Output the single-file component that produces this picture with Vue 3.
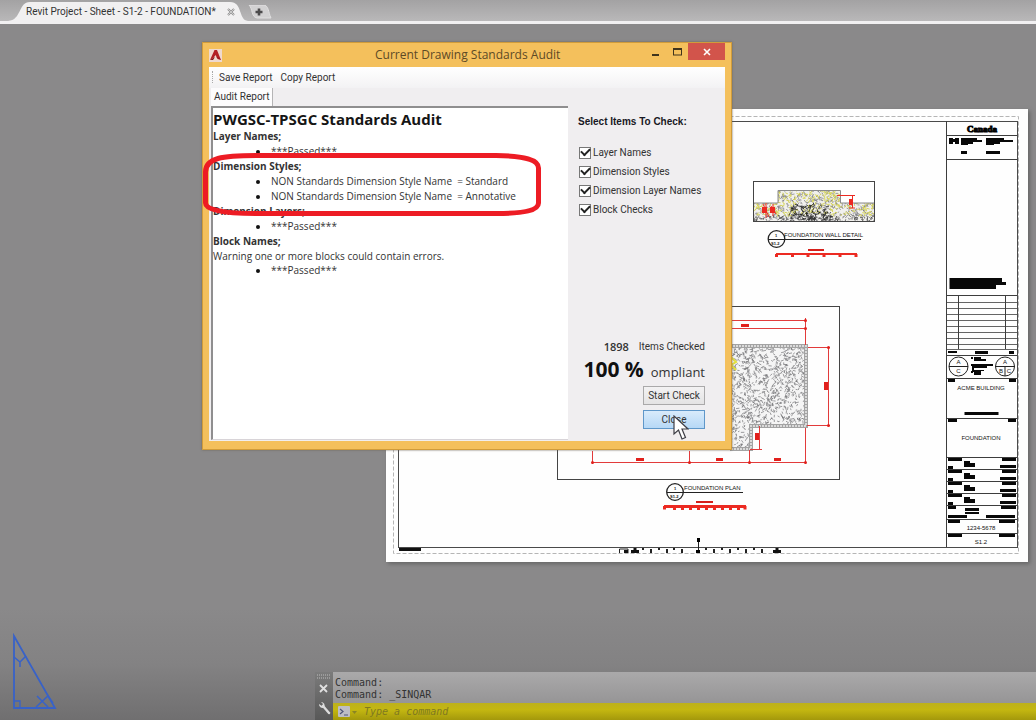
<script setup>
import { ref } from 'vue'

const checks = ref([
  { id: 'layers', label: 'Layer Names', on: true },
  { id: 'dims', label: 'Dimension Styles', on: true },
  { id: 'dimlayers', label: 'Dimension Layer Names', on: true },
  { id: 'blocks', label: 'Block Checks', on: true }
])

const sections = [
  { title: 'Layer Names;', items: ['***Passed***'] },
  {
    title: 'Dimension Styles;',
    items: [
      'NON Standards Dimension Style Name  = Standard',
      'NON Standards Dimension Style Name  = Annotative'
    ]
  },
  { title: 'Dimension Layers;', items: ['***Passed***'] },
  {
    title: 'Block Names;',
    note: 'Warning one or more blocks could contain errors.',
    items: ['***Passed***']
  }
]

const command = ref('')

// Seeded generator keeps the concrete hatch stable between renders.
function hatch(seed, count, x, y, w, h) {
  let s = seed
  const rnd = () => {
    s = (s * 16807) % 2147483647
    return s / 2147483647
  }
  let d = ''
  for (let i = 0; i < count; i++) {
    const px = x + rnd() * w
    const py = y + rnd() * h
    const a = rnd() * Math.PI * 2
    const l = 1.5 + rnd() * 2
    d += `M${px.toFixed(1)} ${py.toFixed(1)}l${(Math.cos(a) * l).toFixed(1)} ${(Math.sin(a) * l).toFixed(1)}`
  }
  return d
}
const slabHatch = hatch(77, 1250, 730, 345, 77, 104)
const wallGrey = hatch(11, 520, 754, 190, 120, 31)
const wallYellow = hatch(29, 330, 754, 191, 120, 24)
const wallCore = hatch(53, 120, 790, 204, 40, 17)
const wallBase = hatch(91, 110, 754, 216, 120, 5)

const revisionLines = [302, 308, 314, 320, 326, 332, 338, 344, 349]
const blockLines = [135, 159, 295, 355, 378, 418, 457, 469, 481, 493, 505, 519, 533]
const rowTops = [458, 470, 482, 494]
const bottomTicks = [651, 667, 682, 714, 730, 746, 762]
</script>

<template>
  <div class="app">
    <nav class="tabs" aria-label="Drawings">
      <div class="tab">
        <svg class="tab-shape" viewBox="0 0 240 20" preserveAspectRatio="none" aria-hidden="true">
          <path d="M0 20C14 19 10 1 22 1H222C235 1 230 19 240 20Z" fill="#f1f0f1" />
        </svg>
        <span class="tab-name">Revit Project - Sheet - S1-2 - FOUNDATION*</span>
        <button class="tab-close" aria-label="Close drawing">
          <svg width="8" height="8" viewBox="0 0 8 8"><path d="M1 1L7 7M7 1L1 7" stroke="#8f8e8f" stroke-width="2" /><path d="M1 1L7 7M7 1L1 7" stroke="#e4e4e4" stroke-width=".7" /></svg>
        </button>
      </div>
      <button class="tab-new" aria-label="New drawing">
        <svg width="24" height="14" viewBox="0 0 24 14">
          <path d="M1 0H15C21 0 20 7 23 13H9C3 12 5 4 1 0Z" fill="#d2d1d2" stroke="#e1e0e1" />
          <path d="M11 3.5V10.5M7.500 7H14.500" stroke="#4c4b4c" stroke-width="2.600" />
        </svg>
      </button>
    </nav>

    <main class="canvas">
      <svg class="sheet" viewBox="386 109 642 453" role="img" aria-label="Foundation sheet">
        <rect x="386" y="109" width="642" height="453" fill="#fefefe" />
        <rect x="393.500" y="116.500" width="625" height="437" fill="none" stroke="#b5b5b5" stroke-dasharray="4 2" />
        <rect x="398.500" y="121.500" width="619" height="426" fill="none" stroke="#4a4a4a" />
        <path d="M399 549.500H421" stroke="#111" stroke-width="3" />

        <!-- wall detail -->
        <rect x="753.500" y="181.500" width="121" height="40" fill="#fff" stroke="#444" />
        <clipPath id="wall"><path d="M754 203H778V190H840V203H874V221H754Z" /></clipPath>
        <g clip-path="url(#wall)" fill="none">
          <path d="M754 190H874V221H754Z" fill="#f1f0ed" />
          <path :d="wallGrey" stroke="#77777c" stroke-width=".7" />
          <path :d="wallYellow" stroke="#d5d24f" stroke-width=".9" />
          <path :d="wallCore" stroke="#222" stroke-width=".8" />
          <path :d="wallBase" stroke="#333" stroke-width=".7" />
        </g>
        <path d="M754 203H778V190.500H840.500V203H874" fill="none" stroke="#8a8a8a" />
        <g stroke="#ec2a22" fill="#ec2a22">
          <path d="M766 203V218M773 204V216M837 195.500H855M852.500 196V208M849 208H855" fill="none" />
          <rect x="762.500" y="207.500" width="4" height="5" /><rect x="770.500" y="207.500" width="4" height="5" />
          <path d="M763 204L769 217M771 206L776 214" fill="none" />
          <rect x="849.500" y="199.500" width="3" height="5" />
        </g>
        <g fill="none" stroke="#222">
          <circle cx="776.500" cy="239" r="8.300" stroke-width="1.300" />
          <path d="M768 239.500H861" />
        </g>
        <text class="micro" x="775" y="237">1</text>
        <text class="micro" x="771" y="245">S1-2</text>
        <text class="label" x="784" y="237">FOUNDATION WALL DETAIL</text>
        <path d="M808 250H824" stroke="#d6201b" stroke-width="2" />
        <path d="M776 254H857" stroke="#ec2a22" stroke-width="2" />
        <path d="M776.500 254V257M792.500 254V257M808 254V257M824 254V257M840 254V257M856 254V257" stroke="#ec2a22" stroke-width="3" />

        <!-- foundation plan -->
        <rect x="557.500" y="306.500" width="282" height="173" fill="none" stroke="#444" />
        <clipPath id="slab"><path d="M730 345H808V428H753V451H730Z" /></clipPath>
        <path d="M730 344H808V428H753V451H730Z" fill="#f5f5f5" />
        <path :d="slabHatch" clip-path="url(#slab)" stroke="#747477" stroke-width=".7" fill="none" />
        <path d="M730 346H806V426H751V449H730" fill="none" stroke="#a3a3a3" stroke-width="4" />
        <path d="M730 346H806V426H751V449H730" fill="none" stroke="#dadada" stroke-width="2" stroke-dasharray="2 1" />
        <path d="M731 357L736 362L731 365L736 370" fill="none" stroke="#e2e040" stroke-width="2" />
        <g fill="none" stroke="#e23b3b">
          <path d="M730 320.500H806M730 328.500H806M805.500 318V345M808 347.500H830M828.500 347V425M807 425.500H830" />
          <path d="M759.500 426V449M750 449.500H762M805.500 428V464M592 462.500H806M592.500 451V464M689.500 451V464M749.500 450V464" />
        </g>
        <g fill="#e1201c">
          <rect x="741" y="324" width="8" height="3" /><rect x="824" y="382" width="4" height="8" />
          <rect x="755" y="433" width="4" height="7" />
          <rect x="636" y="458" width="8" height="3" /><rect x="716" y="458" width="7" height="3" /><rect x="774" y="458" width="7" height="3" />
          <circle v-for="x in [592.5, 689.5, 749.5, 805.5]" :key="x" :cx="x" cy="462.500" r="1.500" />
          <circle cx="805.500" cy="320.500" r="1.500" /><circle cx="805.500" cy="328.500" r="1.500" />
          <circle cx="828.500" cy="347.500" r="1.500" /><circle cx="828.500" cy="425.500" r="1.500" />
        </g>
        <g fill="none" stroke="#222">
          <circle cx="675" cy="492" r="8.300" stroke-width="1.300" />
          <path d="M667 492.500H743" />
        </g>
        <text class="micro" x="674" y="490">1</text>
        <text class="micro" x="670" y="498">S1-2</text>
        <text class="label" x="684" y="490">FOUNDATION PLAN</text>
        <path d="M696 502H713" stroke="#d6201b" stroke-width="2" />
        <path d="M664 506.500H746" stroke="#ec2a22" stroke-width="3" />
        <path d="M664.500 506V509.500M745 506V509.500" stroke="#ec2a22" stroke-width="3" />
        <path d="M673 509H741" stroke="#ec2a22" stroke-width="2" stroke-dasharray="3 5" />

        <!-- sheet scale -->
        <path d="M698.500 540V552" stroke="#222" />
        <rect x="697" y="538" width="3" height="4" />
        <path d="M619.500 553V549H628V553" fill="none" stroke="#222" />
        <path d="M624 551.500H628M631 551.500H639M773 551.500H781" stroke="#111" stroke-width="3" />
        <path d="M635 548V552M777 548V552" stroke="#111" stroke-width="3" />
        <path v-for="x in bottomTicks" :key="x" :d="`M${x} 549V553M${x - 8} 548V550`" stroke="#222" stroke-width="2" />
        <rect x="696" y="550" width="4" height="3" />

        <!-- title block -->
        <g fill="none" stroke="#3d3d3d">
          <path d="M946.500 121V547" />
          <path v-for="y in blockLines" :key="y" :d="`M947 ${y + 0.5}H1017`" />
          <path v-for="y in revisionLines" :key="y" :d="`M947 ${y + 0.5}H1017`" stroke-width=".8" />
          <path d="M958.500 295V349M1005.500 295V349" />
        </g>
        <text class="wordmark" x="967" y="132">Canada</text>
        <g fill="#080808">
          <path d="M949 138H953V139H955V138H959V144H955V142H953V144H949Z" />
          <path d="M961 138H977V140H982V142H973V144H968V145H961Z" />
          <path d="M986 138H1004V140H1013V142H1000V144H994V145H986Z" />
          <rect x="961" y="151" width="6" height="3" /><rect x="986" y="151" width="14" height="3" />
          <path d="M949.500 278H1002V282H1006V285H996V289H949.500Z" />
          <rect x="948" y="351" width="9" height="2" /><rect x="975" y="351" width="13" height="3" /><rect x="1009" y="351" width="5" height="3" />
          <path d="M974 357H981V359H986V361H974ZM972 364H993V366H987V368H974V370H984V371H981V375H974V372H972Z" />
          <rect x="971" y="357" width="2" height="2" /><rect x="971" y="364" width="2" height="2" /><rect x="971" y="371" width="2" height="2" />
          <rect x="948" y="379" width="7" height="3" /><rect x="1009" y="379" width="7" height="3" />
          <rect x="964.500" y="412" width="34" height="3" />
          <rect x="948" y="419" width="9" height="3" /><rect x="1008" y="419" width="8" height="3" />
          <template v-for="y in rowTops" :key="y">
            <rect x="948" :y="y" width="14" height="3" /><rect x="1002" :y="y" width="14" height="3" />
            <rect x="948" :y="y + 8" width="5" height="3" /><rect x="1000" :y="y + 7" width="16" height="3" />
            <path :d="`M964 ${y + 3}H970V${y + 5}H975V${y + 9}H964Z`" />
          </template>
          <rect x="948" y="506" width="8" height="3" /><rect x="1001" y="506" width="15" height="3" />
          <rect x="965" y="508" width="14" height="3" /><rect x="965" y="512" width="14" height="2" />
          <rect x="948" y="515" width="19" height="3" /><rect x="986" y="515" width="29" height="3" />
          <rect x="948" y="520" width="12" height="3" /><rect x="999" y="520" width="16" height="3" />
          <rect x="948" y="534" width="14" height="3" /><rect x="999" y="534" width="16" height="3" />
        </g>
        <g fill="none" stroke="#222">
          <circle cx="958.500" cy="366.500" r="9.500" /><path d="M949 366.500H968" />
          <circle cx="1005" cy="366.500" r="9.500" /><path d="M995 366.500H1015M1005 367V376" />
        </g>
        <g class="plate">
          <text x="958.500" y="364">A</text><text x="958.500" y="373">C</text>
          <text x="1005" y="364">A</text><text x="1001" y="373">B</text><text x="1009" y="373">C</text>
          <text x="981" y="390">ACME BUILDING</text>
          <text x="981" y="440">FOUNDATION</text>
          <text x="981" y="530">1234-5678</text>
          <text x="981" y="544">S1.2</text>
        </g>
      </svg>

      <svg class="ucs" viewBox="0 0 46 78" aria-label="Axis icon">
        <g fill="none" stroke="#3862c8" stroke-width="1.800">
          <path d="M2 3V75H43Z" />
          <path d="M2 68H8V75" stroke-width="1.300" />
          <path d="M2 24L8 29L14 23M8 29V34M25 63L36 74M24 74L36 63L41 70" stroke-width="1.500" />
        </g>
      </svg>

      <section class="dialog" role="dialog" aria-labelledby="dialog-title">
        <header class="titlebar">
          <svg class="logo" width="13" height="13" viewBox="0 0 13 13" aria-hidden="true">
            <rect width="13" height="13" fill="#efd9cf" />
            <path d="M1 11L5.500 1H8L12 11L8.500 10L6.500 6L4.500 9Z" fill="#b32025" />
            <path d="M1 11L6 8L4 11ZM7 8L10 9L12 11Z" fill="#7e1218" />
          </svg>
          <h1 id="dialog-title">Current Drawing Standards Audit</h1>
          <div class="controls">
            <button class="win" aria-label="Minimize"><svg width="8" height="8" viewBox="0 0 8 8"><path d="M1 7H8" stroke="#40341c" stroke-width="2" /></svg></button>
            <button class="win" aria-label="Maximize"><svg width="9" height="8" viewBox="0 0 9 8"><rect x=".5" y="1" width="8" height="6" fill="none" stroke="#40341c" /><path d="M0 1H9" stroke="#40341c" stroke-width="2" /></svg></button>
            <button class="win win-close" aria-label="Close window"><svg width="8" height="8" viewBox="0 0 8 8"><path d="M1 1L7 7M7 1L1 7" stroke="#fff" stroke-width="1.600" /></svg></button>
          </div>
        </header>

        <div class="client">
          <div class="menu">
            <button>Save Report</button>
            <button>Copy Report</button>
          </div>
          <div class="body">
            <div class="left">
              <div class="page-tab" role="tab">Audit Report</div>
              <article class="report">
                <h2>PWGSC-TPSGC Standards Audit</h2>
                <template v-for="s in sections" :key="s.title">
                  <h3>{{ s.title }}</h3>
                  <p v-if="s.note">{{ s.note }}</p>
                  <ul><li v-for="i in s.items" :key="i">{{ i }}</li></ul>
                </template>
              </article>
            </div>
            <aside class="side">
              <fieldset>
                <legend>Select Items To Check:</legend>
                <label v-for="c in checks" :key="c.id" :for="c.id">
                  <input :id="c.id" v-model="c.on" type="checkbox" />
                  <span>{{ c.label }}</span>
                </label>
              </fieldset>
              <div class="result">
                <div class="count"><b>1898</b><span>Items Checked</span></div>
                <div class="score"><b>100 %</b><span>ompliant</span></div>
                <button class="btn">Start Check</button>
                <button class="btn btn-hot">Close</button>
              </div>
            </aside>
          </div>
        </div>
        <svg class="pointer" width="16" height="26" viewBox="0 0 16 26" aria-hidden="true">
          <path d="M1 1V19L5.500 15L9 24L12.500 22.500L9 14H15Z" fill="#fff" stroke="#3f3f46" stroke-width="1.200" />
        </svg>
      </section>

      <svg class="callout" viewBox="202 152 340 65" aria-hidden="true">
        <path d="M205.500 172C205.500 158 222 155.500 256 155.500H496C525 156 538.500 160 538.500 168V203C538.500 210 525 213.500 496 213.500H256C225 213.500 205.500 210 205.500 203Z" fill="none" stroke="#ed1c24" stroke-width="5" />
      </svg>

      <section class="console" aria-label="Command line">
        <div class="rail">
          <svg width="14" height="48" viewBox="0 0 14 48" aria-hidden="true">
            <path d="M0 3H14M0 6H14" stroke="#a6a6a6" stroke-width="1.500" stroke-dasharray="1 1" />
            <path d="M3 13L10 20M10 13L3 20" stroke="#e0e0e0" stroke-width="1.800" />
            <path d="M6 34L12 41" stroke="#dcdcdc" stroke-width="2.400" stroke-linecap="round" />
            <path d="M4 30L6 32L5 34L2 32A3.500 3.500 0 0 0 7 35.500A3.500 3.500 0 0 0 4 30Z" fill="#dcdcdc" />
          </svg>
        </div>
        <div class="lines">
          <pre>Command:
Command: _SINQAR</pre>
          <div class="prompt">
            <svg width="19" height="12" viewBox="0 0 19 12" aria-hidden="true">
              <rect width="12" height="11" rx="1" fill="#bdbdc4" />
              <path d="M2 3L5 5.500L2 8M6 9H10" fill="none" stroke="#4e5478" stroke-width="1.200" />
              <path d="M14 5H19L16.500 8Z" fill="#8a8424" />
            </svg>
            <input v-model="command" aria-label="Command" placeholder="Type a command" />
          </div>
        </div>
      </section>
    </main>
  </div>
</template>

<style>
html, body { margin: 0; overflow: hidden; }
</style>

<style scoped>
* { box-sizing: border-box; }
button { font: inherit; color: inherit; border: 0; padding: 0; margin: 0; background: none; }
svg { display: block; }
.app { height: 100vh; display: flex; flex-direction: column; font-family: "Open Sans", "Noto Sans", sans-serif; color: #333; }
.tabs { height: 24px; flex: none; display: flex; align-items: flex-end; padding-left: 8px; background: linear-gradient(#a3a2a3, #b9b8b9); border-bottom: 3px solid #f1f0f1; }
.tab { position: relative; width: 240px; height: 20px; display: flex; align-items: center; padding: 2px 0 0 18px; gap: 11px; font: 10px/20px Roboto, sans-serif; }
.tab-shape { position: absolute; inset: 0; width: 100%; height: 100%; }
.tab-name, .tab-close { position: relative; white-space: nowrap; }
.tab-new { padding-bottom: 2px; }
.canvas { position: relative; flex: 1; overflow: hidden; background: linear-gradient(#8a898a 0, #8a898a 84%, #838283 92%, #706f70 100%); }
.sheet { position: absolute; left: 386px; top: 85px; width: 642px; box-shadow: 2px 2px 4px #666; }
.label, .micro, .plate, .wordmark { font-family: "Liberation Sans", sans-serif; fill: #111; }
.label { font-size: 6px; }
.micro { font-size: 4px; font-weight: bold; }
.plate { font-size: 6px; text-anchor: middle; }
.wordmark { font-family: "Liberation Serif", serif; font-size: 9px; font-weight: bold; stroke: #000; }
.ucs { position: absolute; left: 12px; bottom: 9px; width: 46px; }
.dialog { position: absolute; left: 202px; top: 18px; width: 530px; padding: 0 6px 8px 6px; background: #f4c05c; border: 1px solid #d19c3a; box-shadow: 0 0 2px #6d6558; }
.titlebar { height: 24px; display: flex; align-items: center; }
.logo { flex: none; }
h1 { flex: 1; margin: 0; padding-left: 153px; font-size: 12px; line-height: 24px; font-weight: 400; color: #5d4a26; }
.controls { display: flex; align-self: flex-start; }
.win { width: 22px; height: 17px; display: grid; place-items: center; }
.win-close { width: 37px; background: #d2544b; }
.client { background: #f0eef0; }
.menu { height: 21px; display: flex; gap: 8px; padding-left: 10px; font: 10px/20px Roboto, sans-serif; background: linear-gradient(#fff, #f3f2f4); position: relative; }
.menu::before { content: ""; position: absolute; left: 3px; top: 4px; height: 12px; border-left: 1px dotted #aaa; }
.body { display: flex; gap: 10px; }
.left { flex: 1; padding-left: 2px; padding-bottom: 1px; }
.page-tab { width: 62px; height: 18px; padding-left: 3px; font: 10px/17px Roboto, sans-serif; background: #fdfcfd; border-right: 1px solid #b5b4b5; }
.report { min-height: 334px; background: #fff; border-top: 2px solid #8f8e8f; border-left: 2px solid #8f8e8f; border-bottom: 1px solid #d8d4d8; font-size: 10px; line-height: 15px; font-weight: 500; color: #333; padding-top: 1px; }
h2 { margin: 0; font-size: 15px; line-height: 20px; font-weight: 700; color: #151515; }
h3 { margin: 0; font-size: 10px; line-height: 15px; font-weight: 700; }
.report p { margin: 0; line-height: 14px; font-size: 10px; font-weight: 500; }
ul { margin: 0; padding: 0 0 0 43px; list-style: none; }
li { display: flex; align-items: center; gap: 11px; white-space: pre; }
li::before { content: ""; width: 4px; height: 4px; border-radius: 50%; background: #111; }
.side { width: 147px; padding: 27px 20px 12px 0; display: flex; flex-direction: column; justify-content: space-between; }
fieldset { border: 0; margin: 0; padding: 0; font: 10px/19px Roboto, sans-serif; }
legend { padding: 0 0 14px; font: bold 10px/14px "Liberation Sans", sans-serif; color: #181824; white-space: nowrap; }
label { display: flex; align-items: center; gap: 2px; white-space: nowrap; }
input[type="checkbox"] { appearance: none; width: 12px; height: 12px; margin: 0 0 0 1px; border: 1px solid #777; background: #fff; display: grid; place-items: center; }
input[type="checkbox"]:checked::before { content: ""; width: 7px; height: 4px; border-left: 2px solid #222; border-bottom: 2px solid #222; transform: rotate(-45deg); margin-bottom: 3px; }
.result { display: flex; flex-direction: column; align-items: flex-end; gap: 5px; }
.count { display: flex; gap: 10px; font: 10px/16px Roboto, sans-serif; white-space: nowrap; }
.count b { font: 600 11px/16px "Open Sans", sans-serif; }
.score { display: flex; align-items: baseline; gap: 7px; font-size: 13px; line-height: 18px; white-space: nowrap; }
.score b { font-size: 21px; font-weight: 700; color: #111; }
.btn { width: 62px; height: 19px; font: 10px/17px Roboto, sans-serif; background: linear-gradient(#f3f2f3, #e4e3e4); border: 1px solid #aaa9aa; }
.btn-hot { background: linear-gradient(#d9ebfb, #b6d8f6); border-color: #5f97c9; }
.pointer { position: absolute; right: 42px; bottom: 8px; }
.callout { position: absolute; left: 202px; top: 128px; width: 340px; }
.console { position: absolute; left: 315px; right: 0; bottom: 0; display: flex; }
.rail { width: 18px; padding-left: 2px; background: linear-gradient(#7b7b7b, #585858); }
.lines { flex: 1; }
pre { margin: 0; padding: 5px 2px 2px; font: 10px/12px "DejaVu Sans Mono", monospace; color: #333; background: linear-gradient(#aaa9aa, #969596); }
.prompt { height: 17px; display: flex; align-items: center; gap: 7px; padding-left: 5px; background: linear-gradient(#bdb11c, #c4b711 40%, #a3980c); }
.prompt input { flex: 1; border: 0; padding: 0; background: none; outline: 0; font: italic 10px/14px "DejaVu Sans Mono", monospace; color: #333; }
.prompt input::placeholder { color: #7f7921; opacity: 1; }
</style>
